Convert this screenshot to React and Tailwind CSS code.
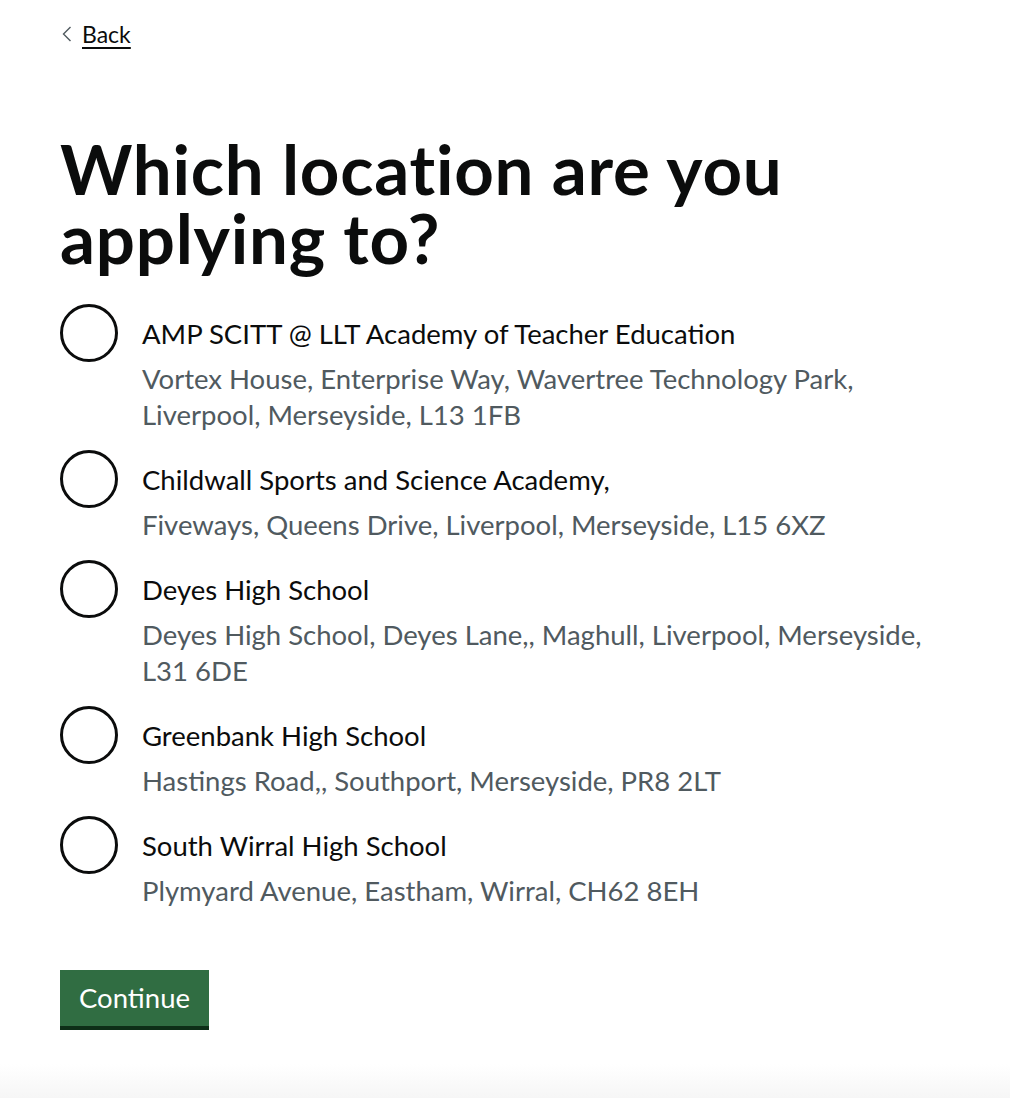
import React from "react";

// Location options shown as radios
const locations = [
    {
        name: "AMP SCITT @ LLT Academy of Teacher Education",
        address:
            "Vortex House, Enterprise Way, Wavertree Technology Park, Liverpool, Merseyside, L13 1FB",
    },
    {
        name: "Childwall Sports and Science Academy,",
        address: "Fiveways, Queens Drive, Liverpool, Merseyside, L15 6XZ",
    },
    {
        name: "Deyes High School",
        address:
            "Deyes High School, Deyes Lane,, Maghull, Liverpool, Merseyside, L31 6DE",
    },
    {
        name: "Greenbank High School",
        address: "Hastings Road,, Southport, Merseyside, PR8 2LT",
    },
    {
        name: "South Wirral High School",
        address: "Plymyard Avenue, Eastham, Wirral, CH62 8EH",
    },
];

const RadioItem = ({ name, address }) => {
    return (
        <label className="flex cursor-pointer">
            <span className="w-[58px] h-[58px] shrink-0 rounded-full border-[3px] border-[#0b0c0c]" />
            <span className="flex flex-col pl-[24px] pt-[12px]">
                <span className="text-[27.5px] leading-[36px]">{name}</span>
                <span className="mt-[9px] text-[27.5px] leading-[36px] text-[#505a5f]">
                    {address}
                </span>
            </span>
        </label>
    );
};

const App = () => {
    return (
        <div className="w-full min-h-[1098px] flex flex-col bg-white text-[#0b0c0c] font-['Lato',sans-serif]">
            <div className="px-[60px] pt-[19px]">
                {/* Back link */}
                <a href="#" className="flex items-center gap-[10px] h-[30px] text-[23px] leading-[30px]">
                    <svg width="10" height="16" viewBox="0 0 10 16" className="ml-[2px]">
                        <polyline
                            points="8.5,1 1.5,8 8.5,15"
                            fill="none"
                            stroke="#505a5f"
                            strokeWidth="1.4"
                        />
                    </svg>
                    <span className="underline decoration-2 underline-offset-[4px]">Back</span>
                </a>

                {/* Question */}
                <h1 className="mt-[85px] text-[69px] leading-[69px] font-bold tracking-[0.75px]">
                    Which location are you
                    <br />
                    applying to?
                </h1>

                {/* Radios */}
                <div className="mt-[32px] flex flex-col gap-[17px]">
                    {locations.map((loc) => (
                        <RadioItem key={loc.name} name={loc.name} address={loc.address} />
                    ))}
                </div>

                <button className="mt-[61px] w-[149px] h-[56px] bg-[#306d42] text-white text-[27.5px] leading-[36px] shadow-[0_4px_0_#0d2e17]">
                    Continue
                </button>
            </div>

            <div className="mt-auto h-[34px] bg-linear-to-b from-white to-[#f6f6f6]" />
        </div>
    );
};

export default App;
